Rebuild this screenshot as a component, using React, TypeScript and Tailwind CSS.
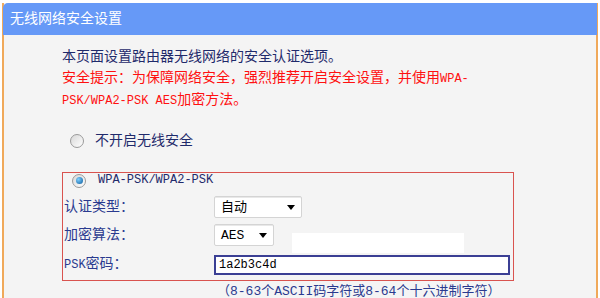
const cjk = "font-['Liberation_Mono','Noto_Sans_CJK_SC',monospace]";

const Radio = ({ checked }: { checked?: boolean }) => (
  <span className="flex h-[14px] w-[14px] items-center justify-center rounded-full border border-[#9a9a9a] bg-gradient-to-br from-[#d8d8d8] to-[#ffffff]">
    {checked && (
      <span className="h-[7px] w-[7px] rounded-full bg-[radial-gradient(circle_at_35%_35%,#7fd0ff,#0a5a9c)]" />
    )}
  </span>
);

const Select = ({ value, width }: { value: string; width: string }) => (
  <div
    className={`flex h-[22px] items-center justify-between rounded-[2px] border border-[#d4d4d4] bg-white pl-[6px] pr-[6px] shadow-[inset_0_1px_0_#e8e8e8] ${width}`}
  >
    <span className="text-[13px] text-black">{value}</span>
    <span className="h-0 w-0 border-x-[4px] border-t-[5px] border-x-transparent border-t-black" />
  </div>
);

export default function App() {
  return (
    <div className={`h-[298px] w-[600px] overflow-hidden bg-white pt-[3px] ${cjk}`}>
      <div className="mx-[2px] h-full border-x-2 border-[#f0a95a] bg-[#f4f4f4]">
        <div className="-mx-[1px] flex h-[32px] items-center rounded-tl-[5px] bg-[#6699f7] pl-[7px] text-[14px] text-white">
          无线网络安全设置
        </div>

        <div className="pl-[58px] pt-[12px] text-[14px] leading-[21px]">
          <p className="text-[#1f2a6b]">本页面设置路由器无线网络的安全认证选项。</p>
          <p className="text-[#ff1010]">
            安全提示：为保障网络安全，强烈推荐开启安全设置，并使用<span className="text-[12px]">WPA-</span>
            <br />
            <span className="text-[12px]">PSK/WPA2-PSK AES</span>加密方法。
          </p>

          <div className="mt-[19px] flex h-[20px] items-center gap-[11px] pl-[8px] text-[#1f2a6b]">
            <Radio />
            <span>不开启无线安全</span>
          </div>

          <div className="relative mt-[21px] w-[452px] border-[1.5px] border-[#d9534f] pb-[4px] pl-[1px]">
            <div className="flex h-[15px] items-center gap-[12px] pl-[8px]">
              <Radio checked />
              <span className="text-[12px] text-[#1f2a6b]">WPA-PSK/WPA2-PSK</span>
            </div>

            <div className="mt-[8px] grid grid-cols-[150px_1fr] items-center gap-y-[6px] text-[#2a3a8f]">
              <span>认证类型：</span>
              <Select value="自动" width="w-[88px]" />

              <span>加密算法：</span>
              <div className="flex items-end">
                <Select value="AES" width="w-[60px]" />
                <div className="mb-[-7px] ml-[18px] h-[20px] w-[172px] bg-white" />
              </div>

              <span className="mt-[2px]">
                <span className="text-[12px]">PSK</span>密码：
              </span>
              <div className="mt-[2px] flex h-[20px] w-[296px] items-center border-2 border-[#3b3f94] bg-white pl-[3px] text-[12px] text-black">
                1a2b3c4d
              </div>
            </div>
          </div>

          <div className="pl-[155px] text-[13px] text-[#2a3a8f]">
            （8-63个ASCII码字符或8-64个十六进制字符）
          </div>
        </div>
      </div>
    </div>
  );
}
